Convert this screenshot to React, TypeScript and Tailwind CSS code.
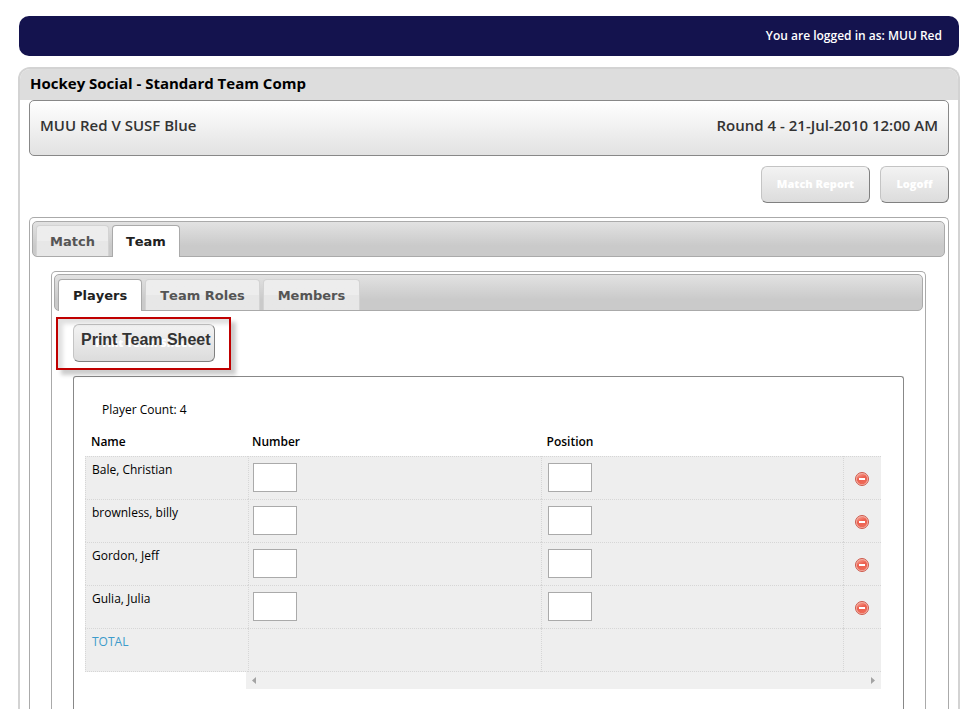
import clsx from "clsx";

const players = ["Bale, Christian", "brownless, billy", "Gordon, Jeff", "Gulia, Julia"];

const buttonStyle =
  "rounded-md border border-t-[#c4c4c4] border-l-[#c4c4c4] border-r-[#808080] border-b-[#808080] bg-linear-to-b from-[#f3f3f3] to-[#dcdcdc] text-[11px] font-extrabold text-white";

function Tabs({ items, active, className }: { items: string[]; active: string; className?: string }) {
  return (
    <nav
      className={clsx(
        "flex gap-[3px] rounded-[5px] border border-[#aaa] bg-linear-to-b from-[#e2e2e2] to-[#cacaca] to-70% pl-[3px] font-['DejaVu_Sans',sans-serif] text-[13px] font-bold [font-kerning:none]",
        className
      )}
    >
      {items.map((item) => (
        <a
          key={item}
          href="#"
          className={clsx(
            "flex items-center rounded-t-[4px] border border-b-0",
            item === active
              ? "-mb-px border-[#aaa] bg-white text-[#212121]"
              : "border-[#d3d3d3] bg-linear-to-b from-[#ededed] from-50% to-[#e7e7e7] to-50% pt-px text-[#555]"
          )}
        >
          {item}
        </a>
      ))}
    </nav>
  );
}

function RemoveIcon() {
  return (
    <svg width="14" height="14" viewBox="0 0 14 14" aria-hidden="true">
      <defs>
        <linearGradient id="ball" x1="0" y1="0" x2="0.4" y2="1">
          <stop offset="0" stopColor="#f9a99b" />
          <stop offset="0.5" stopColor="#ec5f4e" />
          <stop offset="1" stopColor="#ee6a58" />
        </linearGradient>
      </defs>
      <circle cx="7" cy="7" r="6.5" fill="#f6b3a8" stroke="#cc5a4c" />
      <circle cx="7" cy="7" r="5.2" fill="url(#ball)" />
      <rect x="4" y="6" width="6" height="2" fill="#fff" />
    </svg>
  );
}

function PlayerTable() {
  const cell = "border-t border-l border-dotted border-[#d6d6d6] bg-[#eee] align-top";
  const input = "block h-[29px] w-11 border border-[#aaa] bg-white px-1";

  return (
    <table className="w-full table-fixed border-separate border-spacing-0 text-left">
      <thead>
        <tr className="h-[29px]">
          <th className="w-[163px] pl-[6px] font-semibold">Name</th>
          <th className="pl-1 font-semibold">Number</th>
          <th className="w-[38%] pl-[6px] font-semibold">Position</th>
          <th className="w-[38px]" aria-label="Remove" />
        </tr>
      </thead>
      <tbody>
        {players.map((name) => (
          <tr key={name} className="h-[43px]">
            <td className={clsx(cell, "pt-[5px] pl-[6px]")}>{name}</td>
            <td className={clsx(cell, "pt-[6px] pl-1")}>
              <input className={input} aria-label={`Number for ${name}`} />
            </td>
            <td className={clsx(cell, "pt-[6px] pl-[6px]")}>
              <input className={input} aria-label={`Position for ${name}`} />
            </td>
            <td className={clsx(cell, "pt-[15px] pl-[11px]")}>
              <button type="button" className="block" aria-label={`Remove ${name}`}>
                <RemoveIcon />
              </button>
            </td>
          </tr>
        ))}
        <tr className="h-[44px]">
          <td className={clsx(cell, "border-b pt-[5px] pl-[6px] text-[#3d9bcb]")}>TOTAL</td>
          <td className={clsx(cell, "border-b")} />
          <td className={clsx(cell, "border-b")} />
          <td className={clsx(cell, "border-b")} />
        </tr>
      </tbody>
    </table>
  );
}

export default function App() {
  return (
    <div className="flex min-h-screen flex-col bg-white pt-4 pr-1 pl-[18px] font-['Open_Sans','Trebuchet_MS',sans-serif] text-xs text-black">
      <header className="mx-px flex h-10 items-center justify-end rounded-[10px] bg-[#14134e] pr-[17px] font-semibold text-white">
        You are logged in as: MUU Red
      </header>

      <main className="mt-[11px] flex flex-1 flex-col rounded-t-[12px] border-2 border-b-0 border-[#d3d3d3]">
        <h1 className="flex h-[31px] items-center rounded-t-[10px] bg-[#ddd] pb-[3px] pl-[10px] text-[15px] font-bold">
          Hockey Social - Standard Team Comp
        </h1>

        <div className="flex flex-1 flex-col px-[9px]">
          <div className="flex h-14 justify-between rounded-[5px] border border-[#888] bg-linear-to-b from-white to-[#e2e2e2] px-[10px] pt-[14px] text-[15px] font-semibold text-[#333]">
            <span>MUU Red V SUSF Blue</span>
            <span>Round 4 - 21-Jul-2010 12:00 AM</span>
          </div>

          <div className="mt-[10px] flex justify-end gap-[10px]">
            <button type="button" className={clsx(buttonStyle, "h-[37px] w-[109px]")}>
              Match Report
            </button>
            <button type="button" className={clsx(buttonStyle, "h-[37px] w-[69px]")}>
              Logoff
            </button>
          </div>

          <section className="mt-[14px] flex flex-1 flex-col rounded-t-[5px] border border-b-0 border-[#aaa] pt-[3px]">
            <Tabs
              items={["Match", "Team"]}
              active="Team"
              className="mr-[3px] ml-[2px] h-9 pt-[3px] [&>a]:px-[13px]"
            />

            <section className="mt-[14px] mr-[22px] ml-[21px] flex flex-1 flex-col rounded-t-[5px] border border-b-0 border-[#aaa] pt-[2px]">
              <Tabs
                items={["Players", "Team Roles", "Members"]}
                active="Players"
                className="mx-[2px] h-[37px] pt-1 [&>a]:px-[14px]"
              />

              <div className="flex flex-1 flex-col px-[21px] pt-[13px]">
                <div className="relative flex">
                  <button type="button" className={clsx(buttonStyle, "h-[38px] w-[142px]")}>
                    Print Team Sheet
                  </button>
                  <div className="pointer-events-none absolute -top-[7px] -left-[17px] h-[53px] w-[175px] border-2 border-[#c00000] pt-[9px] pl-[23px] font-['Liberation_Sans',sans-serif] text-base font-bold whitespace-nowrap text-[#333] shadow-[5px_5px_4px_rgba(0,0,0,0.2),inset_5px_5px_4px_rgba(0,0,0,0.12)]">
                    Print Team Sheet
                  </div>
                </div>

                <div className="mt-[14px] flex-1 rounded-t-[3px] border border-b-0 border-[#888] pt-[25px] pr-[22px] pb-5 pl-[11px]">
                  <p className="mb-[9px] pl-[17px]">Player Count: 4</p>
                  <PlayerTable />
                  <div className="ml-[161px] flex h-[17px] items-center justify-between bg-[#f0f0f0] px-[6px]">
                    <svg width="4" height="7" viewBox="0 0 4 7" fill="#a3a3a3">
                      <path d="M4 0v7L0 3.5z" />
                    </svg>
                    <svg width="4" height="7" viewBox="0 0 4 7" fill="#a3a3a3">
                      <path d="M0 0v7l4-3.5z" />
                    </svg>
                  </div>
                </div>
              </div>
            </section>
          </section>
        </div>
      </main>
    </div>
  );
}
